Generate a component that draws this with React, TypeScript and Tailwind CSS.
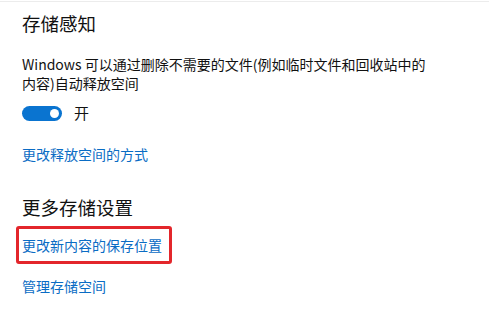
import React from 'react';

const font = { fontFamily: '"Noto Sans CJK SC", "Noto Sans", sans-serif' };

const Toggle: React.FC<{ on: boolean }> = ({ on }) => (
  <div className={`relative w-[40px] h-[15px] rounded-full ${on ? 'bg-[#0a74d0]' : 'bg-gray-300'}`}>
    <div className="absolute right-[3px] top-[3px] w-[9px] h-[9px] rounded-full bg-white" />
  </div>
);

const App: React.FC = () => {
  return (
    <div className="w-[489px] h-[310px] bg-white overflow-hidden text-[#111]" style={font}>
      <div className="h-px mt-[1px] bg-[#ececec]" />

      <div className="pl-[22px] pt-[8px]">
        {/* Storage sense */}
        <h2 className="text-[18.5px] leading-[26px] font-normal">存储感知</h2>

        <p className="mt-[19px] w-[412px] text-[14px] leading-[19px]">
          Windows 可以通过删除不需要的文件(例如临时文件和回收站中的内容)自动释放空间
        </p>

        <div className="mt-[10px] flex items-center gap-[12px] h-[20px]">
          <Toggle on />
          <span className="text-[15px]">开</span>
        </div>

        <a className="block mt-[21px] text-[14px] leading-[20px] text-[#0a6cc4]">更改释放空间的方式</a>

        {/* More storage settings */}
        <h2 className="mt-[30px] text-[18.5px] leading-[26px] font-normal">更多存储设置</h2>

        <div className="mt-[6px] -ml-[6px] inline-flex items-center h-[38px] pl-[3px] pr-[7px] border-[3px] border-[#e3262b] rounded-[3px]">
          <a className="text-[14px] leading-[20px] text-[#0a6cc4]">更改新内容的保存位置</a>
        </div>

        <a className="block mt-[12px] text-[14px] leading-[20px] text-[#0a6cc4]">管理存储空间</a>
      </div>
    </div>
  );
};

export default App;
